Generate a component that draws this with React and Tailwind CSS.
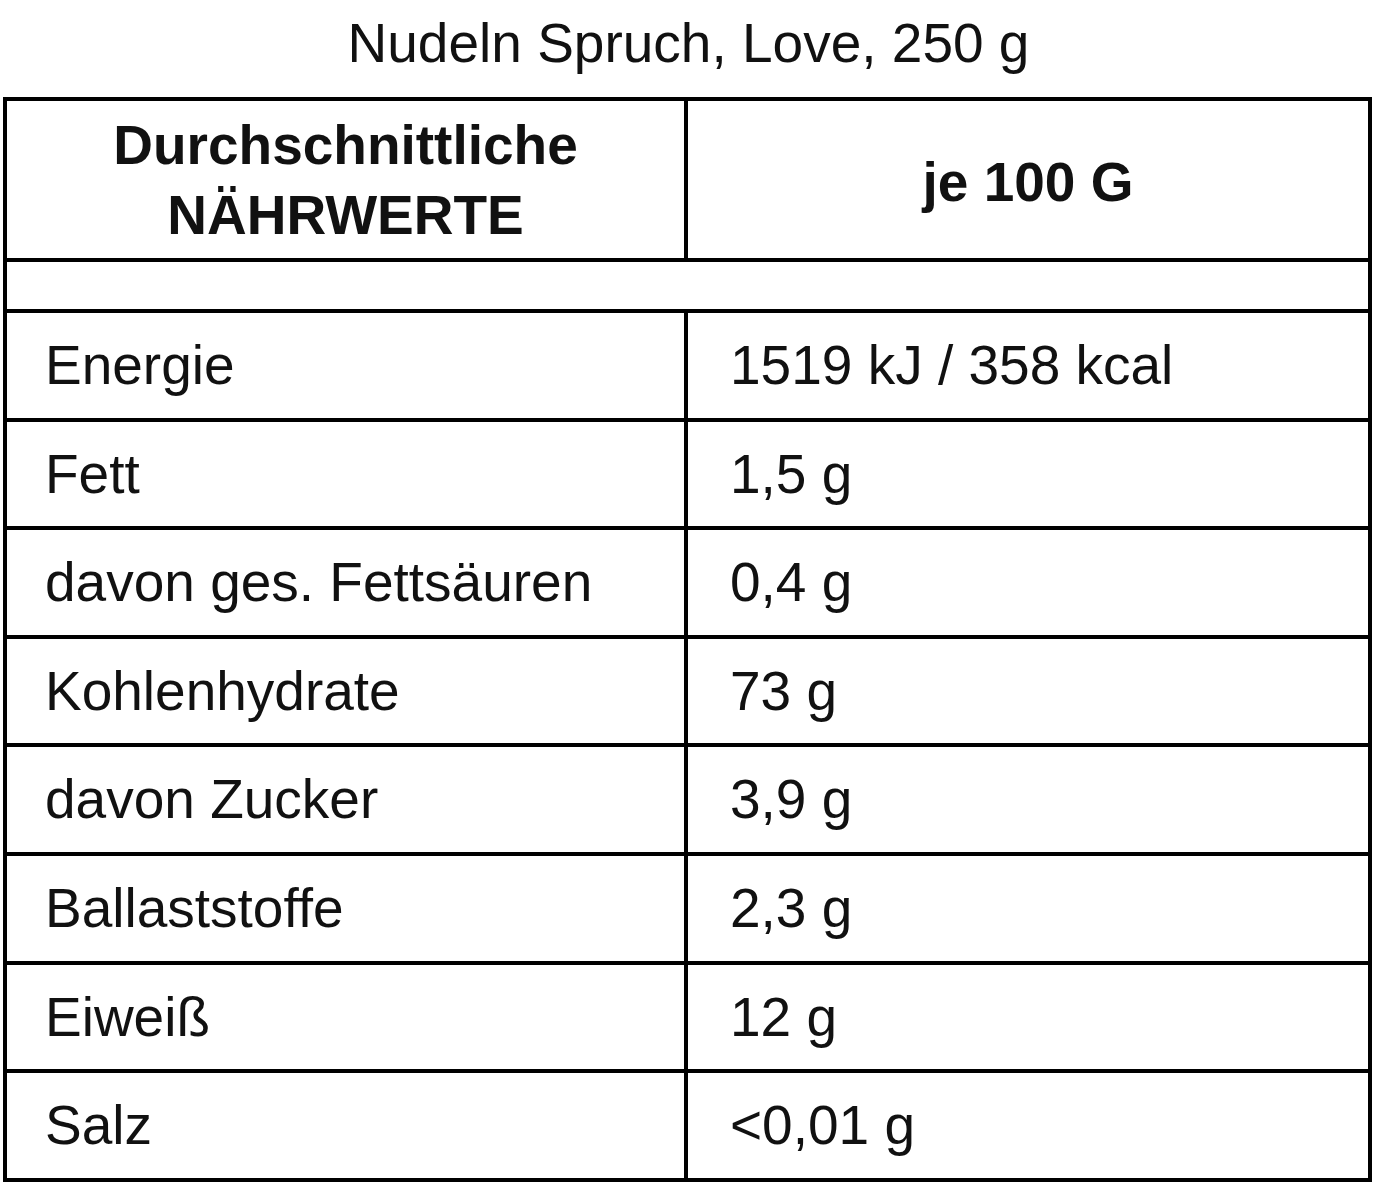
import React from 'react';

const rows = [
  { name: 'Energie', value: '1519 kJ / 358 kcal' },
  { name: 'Fett', value: '1,5 g' },
  { name: 'davon ges. Fettsäuren', value: '0,4 g' },
  { name: 'Kohlenhydrate', value: '73 g' },
  { name: 'davon Zucker', value: '3,9 g' },
  { name: 'Ballaststoffe', value: '2,3 g' },
  { name: 'Eiweiß', value: '12 g' },
  { name: 'Salz', value: '<0,01 g' },
];

export default function App() {
  return (
    <div
      className="min-h-screen w-[1377px] bg-white text-[#111] text-[55px]"
      style={{ fontFamily: '"Liberation Sans", Arial, sans-serif' }}
    >
      <h1 className="pt-[12px] mb-[23px] text-center leading-[62px] font-normal">
        Nudeln Spruch, Love, 250 g
      </h1>

      <div className="ml-[3px] w-[1369px] border-4 border-black">
        {/* header */}
        <div className="flex h-[161px] border-b-4 border-black font-bold">
          <div className="w-[677px] flex items-center justify-center text-center leading-[70px]">
            <div>
              Durchschnittliche
              <br />
              NÄHRWERTE
            </div>
          </div>
          <div className="flex-1 border-l-4 border-black flex items-center justify-center pt-[6px]">
            je 100 G
          </div>
        </div>

        {/* empty spacer row */}
        <div className="h-[51px] border-b-4 border-black" />

        {rows.map((row, i) => (
          <div
            key={row.name}
            className={`flex ${i < rows.length - 1 ? 'h-[108.6px] border-b-4 border-black' : 'h-[104.6px]'}`}
          >
            <div className="w-[677px] flex items-center pl-[38px] leading-normal">{row.name}</div>
            <div className="flex-1 border-l-4 border-black flex items-center pl-[42px] leading-normal">
              {row.value}
            </div>
          </div>
        ))}
      </div>
    </div>
  );
}
